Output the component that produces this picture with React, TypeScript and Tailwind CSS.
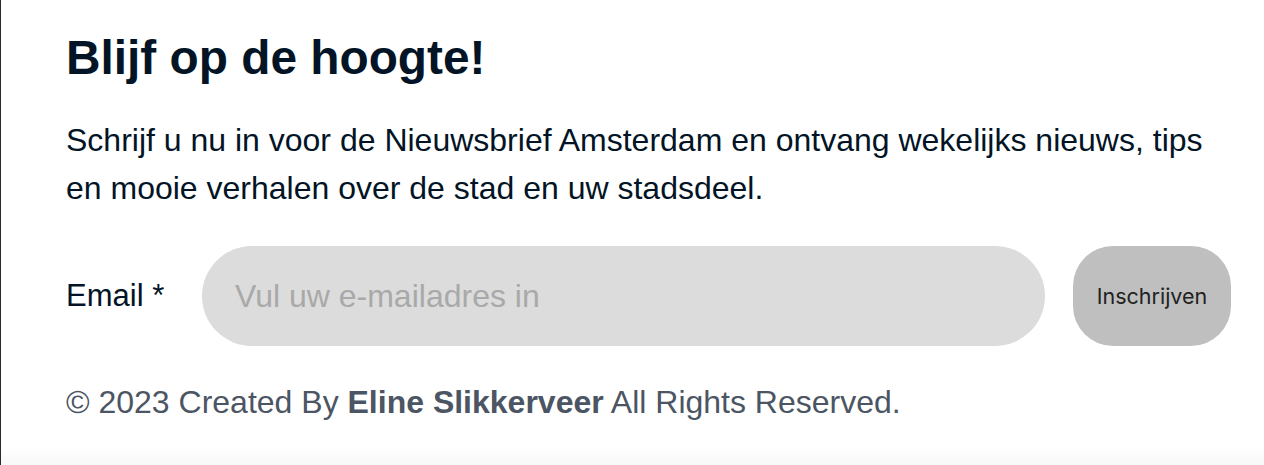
import React from 'react';

export default function App() {
  return (
    <div className="w-[1264px] h-[465px] bg-white border-l border-[#2a2a2a] flex flex-col font-['Liberation_Sans',Arial,sans-serif] overflow-hidden">
      <section className="pl-[65px] pr-8 pt-[30px] flex-1">
        <h1 className="text-[47.8px] leading-[56px] font-bold text-[#021425]">Blijf op de hoogte!</h1>
        <p className="mt-[30px] text-[32px] leading-[48px] text-[#021425] max-w-[1150px]">
          Schrijf u nu in voor de Nieuwsbrief Amsterdam en ontvang wekelijks nieuws, tips en mooie verhalen over de stad en uw stadsdeel.
        </p>
        <form className="mt-[34px] flex items-center" onSubmit={e => e.preventDefault()}>
          <label htmlFor="email" className="text-[31px] text-[#021425] w-[136px] shrink-0">Email *</label>
          <input
            id="email"
            type="email"
            placeholder="Vul uw e-mailadres in"
            className="w-[843px] h-[100px] rounded-full bg-[#dcdcdc] px-[33px] text-[32px] placeholder:text-[#a9a9a9] outline-none"
          />
          <button type="submit" className="ml-[28px] w-[158px] h-[100px] rounded-[40px] bg-[#bfbfbf] text-[21.5px] text-[#222] font-['Inter',sans-serif]">
            Inschrijven
          </button>
        </form>
        <p className="mt-[32px] text-[32px] text-[#4b5563]">
          © 2023 Created By <strong className="font-bold">Eline Slikkerveer</strong> All Rights Reserved.
        </p>
      </section>
      <div className="h-[17px] bg-gradient-to-b from-white to-[#f7f7f7]" />
    </div>
  );
}
